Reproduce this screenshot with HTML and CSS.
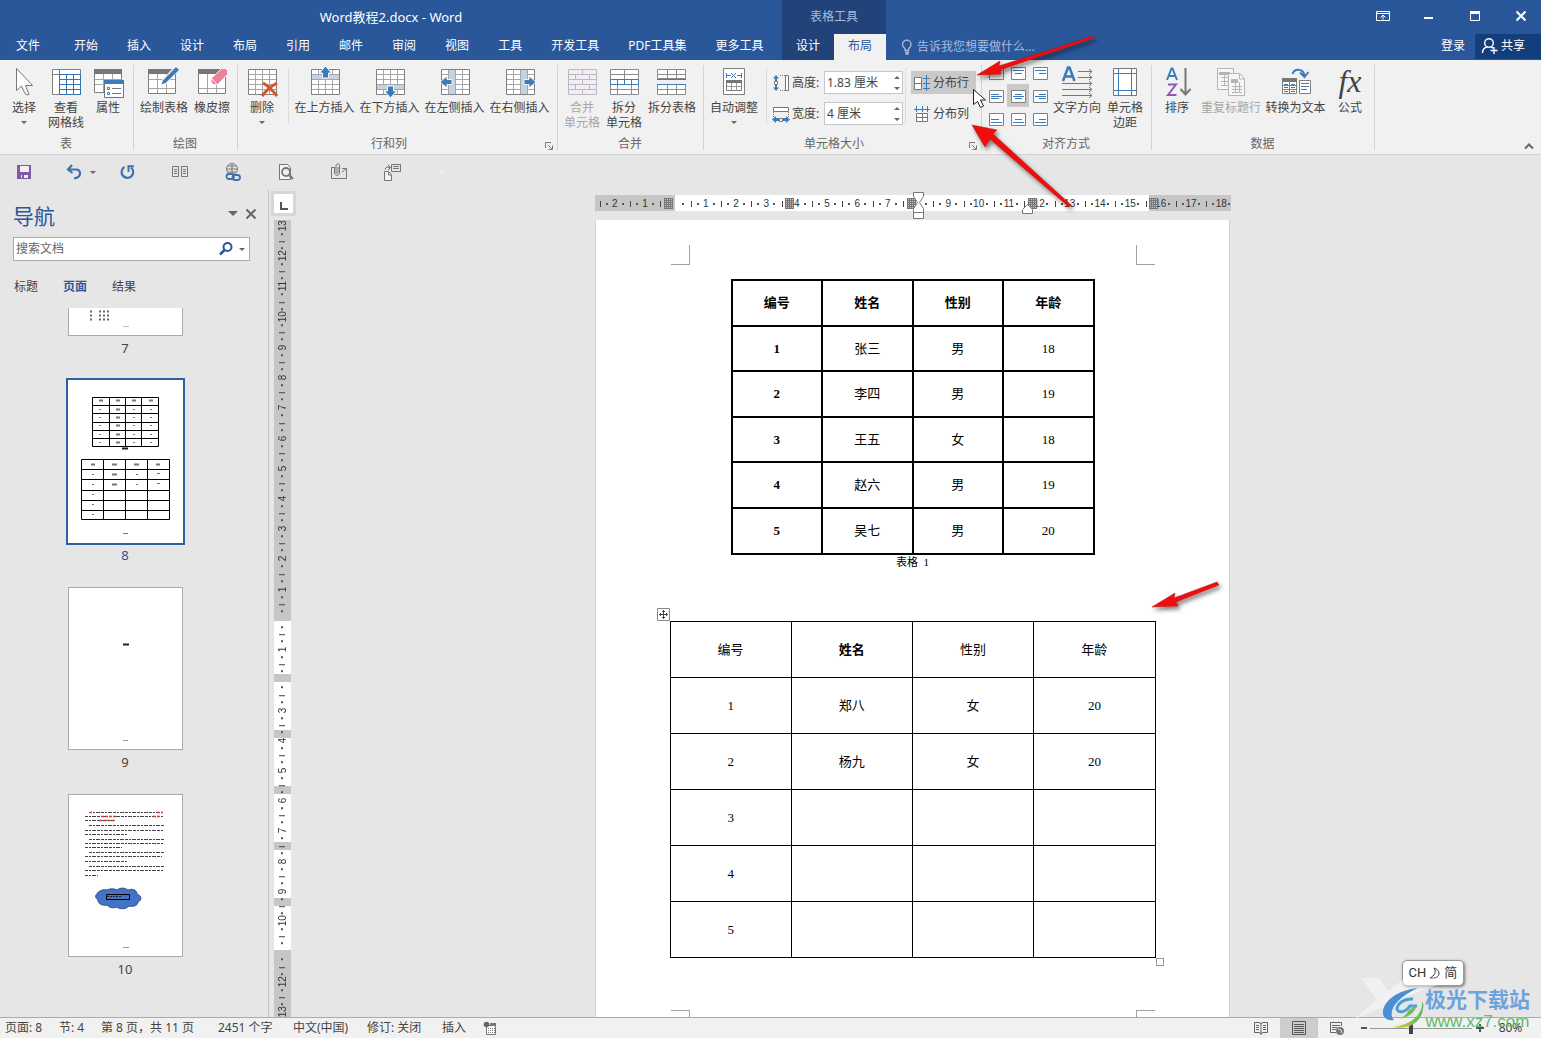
FILE: index.html
```html
<!DOCTYPE html>
<html lang="zh-CN">
<head>
<meta charset="utf-8">
<title>Word教程2.docx - Word</title>
<link rel="stylesheet" href="styles.css">
</head>
<body>
<svg class="defs" aria-hidden="true">
  <defs>
    <symbol id="grid" viewBox="0 0 32 32"><path fill="#fff" stroke="#808080" d="M2.500 3.500h28v25h-28z"/><path fill="none" stroke="#a6a6a6" d="M9.500 4v24M16.500 4v24M23.500 4v24M3 8.500h27M3 13.500h27M3 18.500h27M3 23.500h27"/></symbol>
    <symbol id="drop" viewBox="0 0 8 8"><path d="M1 3h6L4 6z" fill="#666"/></symbol>
    <symbol id="launch" viewBox="0 0 10 10"><path d="M1.500 7V1.500H7M4 4l4 4M8.500 4.500v4h-4" fill="none" stroke="#777"/></symbol>
    <symbol id="frame" viewBox="0 0 16 14"><path d="M1.500 1.500h14v12h-14z" fill="#fff" stroke="#808080"/></symbol>
  </defs>
</svg>

<header class="titlebar">
  <div class="title-left">
    <h1 class="doc-title">Word教程2.docx - Word</h1>
    <nav class="tabs">
      <button class="tab tab-file">文件</button><button class="tab">开始</button><button class="tab">插入</button><button class="tab">设计</button><button class="tab">布局</button><button class="tab">引用</button><button class="tab">邮件</button><button class="tab">审阅</button><button class="tab">视图</button><button class="tab">工具</button><button class="tab">开发工具</button><button class="tab">PDF工具集</button><button class="tab">更多工具</button>
    </nav>
  </div>
  <div class="context">
    <div class="context-name">表格工具</div>
    <div class="context-tabs"><button class="ctab">设计</button><button class="ctab active">布局</button></div>
  </div>
  <div class="title-right">
    <div class="window-buttons">
      <button aria-label="功能区显示选项"><svg width="14" height="12"><path d="M.5 1.500h13v9H.5zM1 3.500h12" fill="none" stroke="#fff"/><path d="M7 9.500v-4M4.500 7.500L7 5l2.500 2.500" fill="none" stroke="#fff"/></svg></button>
      <button aria-label="最小化"><svg width="14" height="12"><path d="M2 7h9v2H2z" fill="#fff"/></svg></button>
      <button aria-label="最大化"><svg width="14" height="12"><path d="M2.500 1.500h9v9h-9z" fill="none" stroke="#fff"/><path d="M2 1h10v3H2z" fill="#fff"/></svg></button>
      <button aria-label="关闭"><svg width="14" height="12"><path d="M2.500 1.500l9 9M11.500 1.500l-9 9" stroke="#fff" stroke-width="2"/></svg></button>
    </div>
    <div class="tell-row">
      <button class="tell"><svg width="12" height="16"><path d="M4 11.500V9.500C2.500 8.500 1.500 7.200 1.500 5.500a4.300 4.300 0 0 1 8.600 0c0 1.700-1 3-2.500 4v2zM4 13.500h4M4.500 15h3" fill="none" stroke="#a9bcd9" stroke-width="1.300"/></svg>告诉我您想要做什么...</button>
      <button class="login">登录</button>
      <button class="share"><svg width="18" height="18"><circle cx="8" cy="6" r="4.300" fill="none" stroke="#fff" stroke-width="1.400"/><path d="M1.500 16c0-3 2-5.500 5-6M10 10l2 1M13 10v7M9.500 13.500h7" fill="none" stroke="#fff" stroke-width="1.400"/></svg>共享</button>
    </div>
  </div>
</header>

<section class="ribbon" aria-label="布局">
  <div class="group g-table">
    <div class="tools">
      <button class="big w48"><svg width="32" height="32"><path d="M8.500 2.500v22l5-4.500 3.500 7.500q2 2.500 4 1l-3.500-9h7z" fill="#fff" stroke="#777"/></svg><span>选择</span><svg class="caret"><use href="#drop"/></svg></button>
      <button class="big w36"><svg width="32" height="32"><path d="M2.500 3.500h28v25h-28z" fill="#fff" stroke="#808080"/><path d="M9.500 4v24M3 8.500h27" stroke="#808080" fill="none"/><path d="M9.500 8.500h21v20h-21zM16.500 8v20M23.500 8v20M10 13.500h20M10 18.500h20M10 23.500h20" fill="none" stroke="#3473b3"/></svg><span>查看<br>网格线</span></button>
      <button class="big w48"><svg width="32" height="32"><path d="M2.500 3.500h27v23h-27z" fill="#fff" stroke="#808080"/><path d="M2 3h28v5H2z" fill="#777"/><path d="M3 13.500h26M3 18.500h26M11.500 8v18M20.500 8v18" stroke="#a6a6a6"/><path d="M12.500 14.500h19v17h-19z" fill="#fff" stroke="#777"/><path d="M12 14h20v4H12z" fill="#3c7ab8"/><path d="M20 22.500h9M20 27.500h9" stroke="#777"/><path d="M15.500 21.500h2v2h-2zM15.500 26.500h2v2h-2z" fill="none" stroke="#3c7ab8"/></svg><span>属性</span></button>
    </div>
    <div class="group-name">表</div>
  </div>
  <div class="group g-draw">
    <div class="tools">
      <button class="big w52"><svg width="32" height="32"><path d="M.5 3.500h27v24H.5z" fill="#fff" stroke="#808080"/><path d="M0 3h28v5H0z" fill="#777"/><path d="M9.500 8v19M18.500 8v19M1 13.500h26M1 22.500h26" stroke="#a6a6a6"/><path d="M16 16L29 2" stroke="#f0f0f0" stroke-width="6"/><path d="M13.500 18.500l1.500-4L28 1l3 3-13.500 13z" fill="#3c7ab8"/></svg><span>绘制表格</span></button>
      <button class="big w44"><svg width="32" height="32"><path d="M2.500 3.500h27v24h-27z" fill="#fff" stroke="#808080"/><path d="M2 3h28v5H2z" fill="#777"/><path d="M11.500 8v19M20.500 8v19M3 22.500h26" stroke="#a6a6a6"/><path d="M15.500 12.500l10-10h4l2 2v4l-10 10h-4l-2.500-2.500z" fill="#e8839b" stroke="#f0f0f0"/><path d="M16 13l4.500 4.500" stroke="#fff"/></svg><span>橡皮擦</span></button>
    </div>
    <div class="group-name">绘图</div>
  </div>
  <div class="group g-rows">
    <div class="tools">
      <button class="big w48"><svg width="32" height="32"><use href="#grid"/><path d="M17 17q7 4 14 13M31 17q-9 5-15 13" fill="none" stroke="#d9532c" stroke-width="3"/></svg><span>删除</span><svg class="caret"><use href="#drop"/></svg></button>
      <i class="rule"></i>
      <button class="big w65"><svg width="32" height="32"><use href="#grid"/><path d="M3 9h27v4H3z" fill="#c3d3e4"/><path d="M16.500 0l6 7h-3v5h-6V7h-3z" fill="#3c7ab8" stroke="#f5f5f5"/></svg><span>在上方插入</span></button>
      <button class="big w65"><svg width="32" height="32"><use href="#grid"/><path d="M3 19h27v4H3z" fill="#c3d3e4"/><path d="M16.500 32l6-7h-3v-5h-6v5h-3z" fill="#3c7ab8" stroke="#f5f5f5"/></svg><span>在下方插入</span></button>
      <button class="big w65"><svg width="32" height="32"><use href="#grid"/><path d="M10 4h6v24h-6z" fill="#c3d3e4"/><path d="M1 16l7-6v3.500h5v5H8V22z" fill="#3c7ab8" stroke="#f5f5f5"/></svg><span>在左侧插入</span></button>
      <button class="big w65"><svg width="32" height="32"><use href="#grid"/><path d="M17 4h6v24h-6z" fill="#c3d3e4"/><path d="M32 16l-7-6v3.500h-5v5h5V22z" fill="#3c7ab8" stroke="#f5f5f5"/></svg><span>在右侧插入</span></button>
    </div>
    <div class="group-name">行和列</div>
    <button class="launcher" aria-label="行和列设置"><svg width="10" height="10"><use href="#launch"/></svg></button>
  </div>
  <div class="group g-merge">
    <div class="tools">
      <button class="big w40" disabled><svg width="32" height="32"><path d="M2.500 3.500h28v25h-28zM3 8.500h27M3 13.500h27M3 18.500h27M3 23.500h27M16.500 4v5M9.500 9v5M23.500 9v5M9.500 19v5M23.500 19v5M16.500 24v4M16.500 14v5" fill="#f3edf5" stroke="#bdb8bf"/></svg><span>合并<br>单元格</span></button>
      <button class="big w44"><svg width="32" height="32"><path d="M2.500 3.500h28v25h-28zM3 8.500h27M3 23.500h27M16.500 4v9M9.500 19v9M23.500 19v9" fill="#fff" stroke="#8c8c8c"/><path d="M2.500 13.500h28v5h-28zM9.500 14v5M16.500 14v5M23.500 14v5" fill="#fff" stroke="#3c7ab8"/></svg><span>拆分<br>单元格</span></button>
      <button class="big w52"><svg width="32" height="32"><path d="M1.500 3.500h28v9h-28zM2 8.500h27M11.500 4v9M20.500 4v9M1.500 18.500h28v10h-28zM2 23.500h27M11.500 19v9M20.500 19v9" fill="#fff" stroke="#8c8c8c"/><path d="M1 13.500h29M1 18.500h29" stroke="#3c7ab8"/></svg><span>拆分表格</span></button>
    </div>
    <div class="group-name">合并</div>
  </div>
  <div class="group g-size">
    <div class="tools">
      <button class="big w60"><svg width="32" height="32"><path d="M5.500 2.500h21v26h-21z" fill="#fff" stroke="#808080"/><path d="M8.500 14.500h15v10h-15z" fill="#fff" stroke="#777"/><path d="M8 14h16v3H8z" fill="#777"/><path d="M9 20.500h15M13.500 17v8M18.500 17v8" stroke="#999"/><path d="M8.500 7v5M23.500 7v5M9 9.500h4M19 9.500h4M13 7l5 5M18 7l-5 5" stroke="#3c7ab8" fill="none"/></svg><span>自动调整</span><svg class="caret"><use href="#drop"/></svg></button>
      <i class="rule"></i>
      <div class="fields">
        <div class="field"><svg width="18" height="18"><path d="M4 1L1 4.500h2V7h2V4.500h2zM4 17l-3-3.500h2V11h2v2.500h2z" fill="#3c7ab8"/><path d="M2.500 7.500h3v3h-3z" fill="#fff" stroke="#777"/><path d="M8 1.500h5M8 16.500h5" stroke="#777" stroke-dasharray="1 1"/><path d="M13.500 1.500h3v15h-3z" fill="#fff" stroke="#777"/></svg><label for="cell-h">高度:</label><div class="spin"><input id="cell-h" type="text" value="1.83 厘米"><svg width="8" height="18"><path d="M1 5h6L4 2zM1 13h6l-3 3z" fill="#666"/></svg></div></div>
        <div class="field"><svg width="18" height="18"><path d="M1.500 2.500h15v4h-15z" fill="#fff" stroke="#777"/><path d="M1.500 7v5M16.500 7v5" stroke="#777" stroke-dasharray="1 1"/><path d="M0 14.500l4-3.500v2h3v3H4v2zM18 14.500L14 11v2h-3v3h3v2z" fill="#3c7ab8"/><path d="M7.500 13.500h3v3h-3z" fill="#fff" stroke="#777"/></svg><label for="cell-w">宽度:</label><div class="spin"><input id="cell-w" type="text" value="4 厘米"><svg width="8" height="18"><path d="M1 5h6L4 2zM1 13h6l-3 3z" fill="#666"/></svg></div></div>
      </div>
      <i class="rule"></i>
      <div class="fields">
        <button class="small hot"><svg width="16" height="16"><path d="M.5 2.500h7v12h-7zM1 8.500h6" fill="#fff" stroke="#777"/><path d="M9 3.500h7M9 8.500h7M9 13.500h7M12.500 0v16" stroke="#3c7ab8"/></svg>分布行</button>
        <button class="small"><svg width="16" height="16"><path d="M2.500 7.500h11v8h-11zM8.500 7v8M3 11.500h11" fill="#fff" stroke="#777"/><path d="M0 3.500h16M2.500 0v6M8.500 0v6M13.500 0v6" stroke="#3c7ab8"/></svg>分布列</button>
      </div>
    </div>
    <div class="group-name">单元格大小</div>
    <button class="launcher" aria-label="单元格大小设置"><svg width="10" height="10"><use href="#launch"/></svg></button>
  </div>
  <div class="group g-align">
    <div class="tools">
      <div class="align-grid">
        <button aria-label="靠上左对齐"><svg width="16" height="14"><use href="#frame"/><path d="M3 4.500h11M3 7.500h8" stroke="#3c7ab8"/></svg></button>
        <button aria-label="靠上居中"><svg width="16" height="14"><use href="#frame"/><path d="M3 4.500h11M5 7.500h7" stroke="#3c7ab8"/></svg></button>
        <button aria-label="靠上右对齐"><svg width="16" height="14"><use href="#frame"/><path d="M3 4.500h11M7 7.500h7" stroke="#3c7ab8"/></svg></button>
        <button aria-label="中部左对齐"><svg width="16" height="14"><use href="#frame"/><path d="M3 5.500h8M3 7.500h11M3 9.500h8" stroke="#3c7ab8"/></svg></button>
        <button aria-label="水平居中" class="on"><svg width="16" height="14"><use href="#frame"/><path d="M5 5.500h7M3 7.500h11M5 9.500h7" stroke="#3c7ab8"/></svg></button>
        <button aria-label="中部右对齐"><svg width="16" height="14"><use href="#frame"/><path d="M7 5.500h7M3 7.500h11M7 9.500h7" stroke="#3c7ab8"/></svg></button>
        <button aria-label="靠下左对齐"><svg width="16" height="14"><use href="#frame"/><path d="M3 7.500h8M3 10.500h11" stroke="#3c7ab8"/></svg></button>
        <button aria-label="靠下居中"><svg width="16" height="14"><use href="#frame"/><path d="M5 7.500h7M3 10.500h11" stroke="#3c7ab8"/></svg></button>
        <button aria-label="靠下右对齐"><svg width="16" height="14"><use href="#frame"/><path d="M7 7.500h7M3 10.500h11" stroke="#3c7ab8"/></svg></button>
      </div>
      <button class="big w52"><svg width="32" height="32"><path d="M2 15L7 1.500h1.500l5 13.500M4 10.500h7" fill="none" stroke="#3c7ab8" stroke-width="2.500"/><path d="M17 5.500h14M17 11.500h14M1 17.500h30M1 23.500h30M1 29.500h30M28 3l3 2.500L28 8M28 9l3 2.500-3 2.500M28 15l3 2.500-3 2.500M28 21l3 2.500-3 2.500M28 27l3 2.500-3 2.500" fill="none" stroke="#777"/></svg><span>文字方向</span></button>
      <button class="big w44"><svg width="32" height="32"><path d="M4.500 2.500h23v27h-23z" fill="#fff" stroke="#777"/><path d="M9.500 3v26M22.500 3v26M5 7.500h22M5 24.500h22" stroke="#3c7ab8"/></svg><span>单元格<br>边距</span></button>
    </div>
    <div class="group-name">对齐方式</div>
  </div>
  <div class="group g-data">
    <div class="tools">
      <button class="big w44"><svg width="32" height="32"><path d="M6 14l4.500-11.500h1L16 14M8 10h6" fill="none" stroke="#3c7ab8" stroke-width="2"/><path d="M7 18.500h8L7 29h8.500" fill="none" stroke="#8d5ab0" stroke-width="2"/><path d="M24.500 2v26M19.500 23l5 5.500 5-5.500" fill="none" stroke="#777" stroke-width="2"/></svg><span>排序</span></button>
      <button class="big w64" disabled><svg width="32" height="32"><path d="M2.500 2.500h16v21h-16zM6 11.500h10M6 15.500h10M6 19.500h10M9.500 8v12M13.500 8v12" fill="#f6f6f6" stroke="#b5b5b5"/><path d="M4 6h11v3H4z" fill="#b5b5b5"/><path d="M13.500 7.500h11l5 5v17h-16z" fill="#f6f6f6" stroke="#b5b5b5"/><path d="M24.500 8v5h5M17 20.500h10M17 23.500h10M17 26.500h10M20.500 16v11M24.500 16v11" fill="none" stroke="#b5b5b5"/><path d="M16 13h7v4h-7z" fill="#b5b5b5"/></svg><span>重复标题行</span></button>
      <button class="big w65"><svg width="32" height="32"><path d="M2.500 12.500h14v15h-14zM3 19.500h13M3 23.500h13M9.500 15v13" fill="#fff" stroke="#808080"/><path d="M2 12h15v4H2z" fill="#777"/><path d="M4 18.500h4M11 18.500h4M4 21.500h4M11 21.500h4M4 25.500h4M11 25.500h4" stroke="#3c7ab8"/><path d="M19.500 14.500h11v13h-11z" fill="#fff" stroke="#808080"/><path d="M21 17.500h8M21 20.500h8M21 23.500h6" stroke="#3c7ab8"/><path d="M12.500 8c2-6 11-6 12 2M20 6.500l4.500 4.500 4-5" fill="none" stroke="#3c7ab8" stroke-width="2"/></svg><span>转换为文本</span></button>
      <button class="big w44"><b class="fx">fx</b><span>公式</span></button>
    </div>
    <div class="group-name">数据</div>
  </div>
  <button class="collapse" aria-label="折叠功能区"><svg width="10" height="8"><path d="M1 6.500l4-4 4 4" fill="none" stroke="#666" stroke-width="2"/></svg></button>
</section>

<div class="quick">
  <button aria-label="保存"><svg width="18" height="18"><path d="M2 2h14v14H2z" fill="#7f5aa5"/><path d="M5 3h9v6H5zM6 12h7v3H6z" fill="#f0f0f0"/><path d="M7 12h2v3H7z" fill="#7f5aa5"/></svg></button>
  <button class="undo" aria-label="撤消"><svg width="18" height="18"><path d="M7 2L3 6.500 7.500 10M4 6.500h7q4 0 4 4t-6 5" fill="none" stroke="#3f72ad" stroke-width="2.200"/></svg><svg width="8" height="8"><use href="#drop"/></svg></button>
  <button class="redo" aria-label="重复"><svg width="18" height="18"><path d="M6.500 4a5.800 5.800 0 1 0 6.500.500" fill="none" stroke="#3f72ad" stroke-width="2.200"/><path d="M16 3.200h-5.500V9" fill="none" stroke="#3f72ad" stroke-width="2"/></svg></button>
  <button aria-label="双页"><svg width="18" height="18"><path d="M1.500 3.500h6v10h-6zM10.500 3.500h6v10h-6zM3 6.500h3M3 8.500h3M3 10.500h3M12 6.500h3M12 8.500h3M12 10.500h3" fill="none" stroke="#777"/></svg></button>
  <button aria-label="超链接"><svg width="18" height="18"><circle cx="8" cy="6" r="5.500" fill="none" stroke="#777"/><path d="M2.500 6h11M8 .5v11M4 3h8M4 9h8" stroke="#777"/><path d="M3 11h13v6H3z" fill="#e6e6e6"/><rect x="2.500" y="11" width="7.500" height="5" rx="2.500" fill="none" stroke="#3f72ad" stroke-width="1.800"/><rect x="8.500" y="12" width="7.500" height="5" rx="2.500" fill="none" stroke="#3f72ad" stroke-width="1.800"/></svg></button>
  <button aria-label="打印预览"><svg width="18" height="18"><path d="M2.500 1.500h8l3 3v12h-11z" fill="#f5f5f5" stroke="#777"/><circle cx="9" cy="9" r="4" fill="#eee" stroke="#777" stroke-width="1.800"/><path d="M12 12l4 4" stroke="#777" stroke-width="2.400"/></svg></button>
  <button aria-label="附件"><svg width="18" height="18"><path d="M4 4.500H1.500v11h15v-10H12M12 9l4-3" fill="none" stroke="#777"/><path d="M4.500 4v6c0 3 5 3 5 0V3c0-3-3.500-3-3.500 0v6.500c0 1 2 1 2 0V4" fill="none" stroke="#777"/></svg></button>
  <button aria-label="转换"><svg width="18" height="18"><path d="M8.500 1.500h9v7h-9zM10 3.500h6M10 5.500h6" fill="none" stroke="#777"/><path d="M1.500 8.500h4l3 3v6h-7zM5.500 9v3h3" fill="#f5f5f5" stroke="#777"/><path d="M2 6.500Q3 3 7 4.500M5 2l2.500 2.500L5 7" fill="none" stroke="#3f72ad"/></svg></button>
  <button aria-label="自定义快速访问工具栏"><svg width="12" height="8"><path d="M4 3h5L6 6z" fill="#f2f2f2"/></svg></button>
</div>

<div class="workspace">
  <aside class="nav-pane">
    <div class="nav-head"><h2>导航</h2><button aria-label="任务窗格选项"><svg width="12" height="12"><path d="M1 3h10L6 8z" fill="#666"/></svg></button><button aria-label="关闭导航"><svg width="12" height="12"><path d="M1.500 1.500l9 9M10.500 1.500l-9 9" stroke="#666" stroke-width="2"/></svg></button></div>
    <div class="search"><input type="text" placeholder="搜索文档" aria-label="搜索文档"><svg width="16" height="16"><circle cx="9.500" cy="6" r="4" fill="none" stroke="#2b579a" stroke-width="2"/><path d="M6.500 9L2 13.500" stroke="#2b579a" stroke-width="2.600"/></svg><svg class="caret"><use href="#drop"/></svg></div>
    <div class="nav-tabs"><button>标题</button><button class="on">页面</button><button>结果</button></div>
    <div class="thumbs">
      <figure class="cut"><svg class="thumb" viewBox="0 0 113 27"><path d="M21 3.500h4M30 3.500h10M21 7.500h4M30 7.500h10M21 11.500h4M30 11.500h10" stroke="#666" stroke-width="2" stroke-dasharray="2 2"/><path d="M54 18.500h6" stroke="#bbb"/></svg><figcaption>7</figcaption></figure>
      <figure class="sel"><svg class="thumb" viewBox="0 0 115 163"><path d="M24.500 17.500h66v49h-66zM24.500 25.500h66M24.500 33.500h66M24.500 42.500h66M24.500 50.500h66M24.500 58.500h66M41.500 17.500v49M57.500 17.500v49M73.500 17.500v49M13.500 79.500h88v60h-88zM13.500 89.500h88M13.500 99.500h88M13.500 110.500h88M13.500 120.500h88M13.500 130.500h88M35.500 79.500v60M57.500 79.500v60M79.500 79.500v60" fill="none" stroke="#000"/><path d="M31 20.500h4M48 20.500h4M64 20.500h4M81 20.500h4M48 29.500h4M48 37.500h4M48 45.500h4M48 54.500h4M48 62.500h4M23 84.500h4M44 84.500h5M66 84.500h5M88 84.500h4M44 94.500h5M44 104.500h5" stroke="#777" stroke-width="2"/><path d="M54 68.500h6" stroke="#222" stroke-width="2"/><path d="M31 29.500h2M31 37.500h2M31 45.500h2M31 54.500h2M31 62.500h2M65 29.500h2M65 37.500h2M65 45.500h2M65 54.500h2M65 62.500h2M82 29.500h2M82 37.500h2M82 45.500h2M82 54.500h2M82 62.500h2M24 94.500h2M24 104.500h2M24 114.500h2M24 124.500h2M24 134.500h2M68 94.500h2M68 104.500h2M89 93.500h3M89 103.500h3M55 153.500h5" stroke="#777"/></svg><figcaption>8</figcaption></figure>
      <figure><svg class="thumb" viewBox="0 0 113 161"><path d="M54 56.500h6" stroke="#222" stroke-width="2"/><path d="M54 152.500h5" stroke="#999"/></svg><figcaption>9</figcaption></figure>
      <figure><svg class="thumb" viewBox="0 0 113 161"><g fill="none" stroke="#444" stroke-dasharray="3 1 2 1 4 1"><path d="M20 17.500h74M16 21.500h79M16 25.500h31M20 30.500h75M16 35.500h79M16 39.500h43M20 44.500h75M16 48.500h79M16 52.500h37M20 57.500h75M16 61.500h77M16 66.500h42M20 71.500h75M16 75.500h79M16 80.500h13"/></g><path d="M20 17.500h5M88 17.500h6M32 21.500h15M84 21.500h8M30 25.500h16" stroke="#d23f31" stroke-width="1.500" stroke-dasharray="3 1"/><path d="M28 99c1-3 6-5 10-4 4-2 8-1 10 0 4-3 8-2 11 0 6-2 9 1 9 4 5 2 5 6 1 8 0 4-6 5-9 4-4 4-10 3-12 1-5 2-8 0-10-2-6 1-9-2-9-5-3-2-3-5-1-6z" fill="#4472c4" stroke="#2f528f"/><path d="M37.500 99.500h23v5h-23z" fill="none" stroke="#000"/><path d="M38 101.500h14" stroke="#222" stroke-dasharray="2 1"/><path d="M54 152.500h6" stroke="#999"/></svg><figcaption>10</figcaption></figure>
    </div>
  </aside>
  <div class="vruler-col">
    <button class="tabstop" aria-label="左对齐制表符"><svg width="8" height="8"><path d="M1 0v7h7" fill="none" stroke="#555" stroke-width="2"/></svg></button>
    <div class="vruler"><div class="vcells"><i>13</i><i>12</i><i>11</i><i>10</i><i>9</i><i>8</i><i>7</i><i>6</i><i>5</i><i>4</i><i>3</i><i>2</i><i>1</i><i></i><i>1</i><i></i><i>3</i><i>4</i><i>5</i><i>6</i><i>7</i><i>8</i><i>9</i><i>10</i><i></i><i>12</i><i>13</i></div></div>
  </div>
  <main class="canvas">
    <div class="hruler"><div class="hcells"><i>2</i><i>1</i><i></i><i>1</i><i>2</i><i>3</i><i>4</i><i>5</i><i>6</i><i>7</i><i></i><i>9</i><i>10</i><i>11</i><i>12</i><i>13</i><i>14</i><i>15</i><i>16</i><i>17</i><i>18</i></div>
      <b class="colmark m1"></b><b class="colmark m2"></b><b class="colmark m3"></b><b class="colmark m4"></b><b class="colmark m5"></b>
      <svg class="indent" width="12" height="28"><path d="M1.500.5h10v4l-4 6 4 6v4h-10v-4l4-6-4-6zM1.500 20.500h10v6h-10z" fill="#fff" stroke="#777"/></svg>
      <svg class="rindent" width="12" height="12"><path d="M1.500 10.500v-4l5-5 5 5v4z" fill="#fff" stroke="#777"/></svg>
    </div>
    <article class="page">
      <div class="crops top"><i></i><i></i></div>
      <table class="t1">
        <caption>表格&nbsp; 1</caption>
        <thead><tr><th>编号</th><th>姓名</th><th>性别</th><th>年龄</th></tr></thead>
        <tbody>
          <tr><th>1</th><td>张三</td><td>男</td><td>18</td></tr>
          <tr><th>2</th><td>李四</td><td>男</td><td>19</td></tr>
          <tr><th>3</th><td>王五</td><td>女</td><td>18</td></tr>
          <tr><th>4</th><td>赵六</td><td>男</td><td>19</td></tr>
          <tr><th>5</th><td>吴七</td><td>男</td><td>20</td></tr>
        </tbody>
      </table>
      <div class="t2-wrap">
        <svg class="handle" width="13" height="13"><path d="M.5.5h12v12H.5z" fill="#fff" stroke="#888"/><path d="M6.500 2.500v8M2.500 6.500h8M5 4l1.500-1.500L8 4M5 9l1.500 1.500L8 9M4 5L2.500 6.500 4 8M9 5l1.500 1.500L9 8" fill="none" stroke="#444"/></svg>
        <table class="t2">
          <tbody>
            <tr><td>编号</td><td><b>姓名</b></td><td>性别</td><td>年龄</td></tr>
            <tr><td>1</td><td>郑八</td><td>女</td><td>20</td></tr>
            <tr><td>2</td><td>杨九</td><td>女</td><td>20</td></tr>
            <tr><td>3</td><td></td><td></td><td></td></tr>
            <tr><td>4</td><td></td><td></td><td></td></tr>
            <tr><td>5</td><td></td><td></td><td></td></tr>
          </tbody>
        </table>
        <i class="resize"></i>
      </div>
      <div class="crops bottom"><i></i><i></i></div>
    </article>
  </main>
</div>

<footer class="status">
  <span class="s-page">页面: 8</span><span class="s-sec">节: 4</span><span class="s-of">第 8 页，共 11 页</span><span class="s-words">2451 个字</span><span class="s-lang">中文(中国)</span><span class="s-rev">修订: 关闭</span><span class="s-ins">插入</span>
  <svg width="14" height="14"><path d="M3.500 4.500h9v9h-9z" fill="#fff" stroke="#777"/><path d="M5 7.500h7M5 9.500h7M5 11.500h7" stroke="#777" stroke-dasharray="1 1"/><path d="M7 2h6v3H7z" fill="#777"/><circle cx="3.500" cy="3.500" r="2.800" fill="#666"/></svg>
  <div class="views">
    <button aria-label="阅读视图"><svg width="14" height="14"><path d="M.5 1.500H5l2 1 2-1h4.500v10H9l-2 1-2-1H.5zM7 2v12M2 4.500h3M2 6.500h3M2 8.500h3M9 4.500h3M9 6.500h3M9 8.500h3" fill="none" stroke="#666"/></svg></button>
    <button class="on" aria-label="页面视图"><svg width="14" height="14"><path d="M.5 .5h13v13H.5zM2 3.500h10M2 5.500h10M2 7.500h10M2 9.500h10M2 11.500h10" fill="none" stroke="#555"/></svg></button>
    <button aria-label="Web 版式"><svg width="14" height="14"><path d="M11.500 5V1.500H.5v10H6M2 4.500h8M2 6.500h5M2 8.500h4" fill="none" stroke="#666"/><circle cx="10" cy="10" r="4" fill="#777"/><path d="M8 8l3 1 1 3" stroke="#ddd" fill="none"/></svg></button>
  </div>
  <button class="zoom-step" aria-label="缩小"><svg width="8" height="8"><path d="M1 4h6" stroke="#555" stroke-width="2"/></svg></button>
  <input class="zoom" type="range" min="0" max="100" value="40" aria-label="显示比例">
  <button class="zoom-step" aria-label="放大"><svg width="8" height="8"><path d="M0 4h8M4 0v8" stroke="#555" stroke-width="2"/></svg></button>
  <button class="percent">80%</button>
</footer>

<svg class="arrows" width="264" height="600" aria-hidden="true">
  <defs><filter id="sh" x="-20%" y="-20%" width="150%" height="150%"><feDropShadow dx="2" dy="3" stdDeviation="2" flood-color="#000" flood-opacity=".5"/></filter></defs>
  <g filter="url(#sh)" fill="#f01010" stroke="#b01414" stroke-width=".5">
    <path d="M14 45l23-14-1 5 94-30 1 2-94 32 1 4z"/>
    <path d="M9 95l25 5-4 4 78 71-2 2-79-68-5 8z"/>
    <path d="M189 577l23-14-1 5 43-16 2 3-43 17 2 4z"/>
  </g>
  <path d="M10.500 59.500v15l4-3 3 6 3-1.500-3-6h5z" fill="#fff" stroke="#222"/>
</svg>
<div class="ime">CH<svg width="12" height="13"><path d="M5 1c3 4 0 8-4 10 5 1 9-1 9-5 0-2-2-4-5-5z" fill="none" stroke="#333"/></svg>简</div>
<div class="watermark">
  <svg class="wx" width="110" height="56" aria-hidden="true"><path d="M8 0h18l20 30H30zM52 0h50L50 20 0 42 34 14z" fill="#fff" opacity=".45"/></svg>
  <svg class="wlogo" width="44" height="40" aria-hidden="true"><defs><linearGradient id="sw" x1="1" x2="0" y2="1"><stop stop-color="#5fb86a"/><stop offset=".5" stop-color="#6abf5c"/><stop offset="1" stop-color="#f0d040"/></linearGradient></defs><path d="M36 0C16 2 0 13 1 26c1 5 6 7 11 6C5 25 13 10 36 0z" fill="#4a8fd4"/><path d="M31 11c-9-1-16 5-16 10 1 5 9 3 13-3h7" fill="none" stroke="#4a9fd4" stroke-width="3"/><path d="M40 13c1 14-10 23-29 26 9 3 28-1 30-18 1-4 0-6-1-8zM35 17c-2 7-8 13-19 14 6-1 9-6 11-9z" fill="url(#sw)"/></svg>
  <div class="wtext"><strong>极光下载站</strong><em>www.xz7.com</em></div>
</div>
</body>
</html>
```
FILE: styles.css
```css
* { box-sizing: border-box; }
html, body { height: 100%; }
body {
  margin: 0;
  display: flex;
  flex-direction: column;
  position: relative;
  overflow: hidden;
  background: #e6e6e6;
  color: #444;
  font: 12px/16px "Noto Sans", "Noto Sans CJK SC", sans-serif;
}
button {
  border: 0;
  padding: 0;
  background: none;
  color: inherit;
  font: inherit;
  white-space: nowrap;
}
svg { display: block; flex: none; }
i { font-style: normal; }
h1, h2, figure { margin: 0; font-weight: normal; }
.defs { position: absolute; width: 0; height: 0; }

/* title bar */
.titlebar { display: flex; height: 60px; flex: none; background: #2a579a; color: #fff; }
.title-left { width: 782px; flex: none; display: flex; flex-direction: column; }
.doc-title { font-size: 13px; line-height: 34px; height: 34px; text-align: center; }
.tabs { display: flex; height: 26px; }
.tab { padding: 0 15px 2px 14px; }
.tab-file { width: 60px; padding: 0 4px 2px 0; }
.context { width: 104px; flex: none; background: #21437a; display: flex; flex-direction: column; }
.context-name { height: 34px; line-height: 34px; text-align: center; color: #a9bcd9; }
.context-tabs { display: flex; flex: 1; }
.ctab { width: 52px; padding-bottom: 2px; }
.ctab.active { background: #f1f1f1; color: #2a579a; }
.title-right { flex: 1; display: flex; flex-direction: column; }
.window-buttons { display: flex; justify-content: flex-end; height: 34px; }
.window-buttons button { width: 46px; display: flex; align-items: center; justify-content: center; padding: 0 0 2px 6px; }
.tell-row { display: flex; height: 25px; }
.tell { display: flex; align-items: center; gap: 4px; margin: 0 auto 0 15px; color: #a9bcd9; }
.login { padding: 0 10px 2px; }
.share { width: 66px; display: flex; align-items: center; gap: 2px; padding: 0 0 2px 6px; background: #123f7c; }

/* ribbon */
.ribbon { display: flex; height: 95px; flex: none; background: #f1f1f1; border-bottom: 1px solid #d2d2d2; position: relative; }
.group { display: flex; flex-direction: column; position: relative; flex: none; }
.group::after { content: ""; position: absolute; right: 0; top: 5px; height: 85px; width: 1px; background: #d4d4d4; }
.g-table { width: 134px; }
.g-draw { width: 104px; }
.g-rows { width: 320px; }
.g-merge { width: 146px; }
.g-size { width: 278px; }
.g-align { width: 170px; }
.g-data { width: 223px; }
.tools { display: flex; height: 76px; padding-top: 6px; }
.g-draw .tools, .g-merge .tools { padding-left: 4px; }
.g-data .tools { padding-left: 3px; }
.group-name { text-align: center; color: #666; padding-right: 2px; }
.g-rows .group-name, .g-size .group-name { padding-right: 18px; }
.big { display: flex; flex-direction: column; align-items: center; flex: none; line-height: 15px; }
.big span { margin-top: 2px; }
.big:disabled { color: #a6a6a6; }
.caret { width: 8px; height: 8px; margin-top: 3px; }
.w36 { width: 36px; }
.w40 { width: 40px; }
.w44 { width: 44px; }
.w48 { width: 48px; }
.w52 { width: 52px; }
.w60 { width: 60px; }
.w64 { width: 64px; }
.w65 { width: 65px; }
.rule { width: 1px; height: 56px; margin: 2px 3px 0 2px; background: #dcdcdc; flex: none; }
.launcher { position: absolute; right: 4px; bottom: 3px; }
.fields { display: flex; flex-direction: column; gap: 8px; padding-top: 5px; margin-left: 2px; }
.field { display: flex; align-items: center; height: 23px; }
.field label { width: 34px; padding-left: 2px; }
.spin { width: 79px; height: 23px; display: flex; align-items: center; border: 1px solid #c6c6c6; background: #fff; padding-right: 3px; }
.spin input { width: 68px; border: 0; padding: 0 0 0 2px; background: none; color: #444; font: inherit; }
.small { width: 65px; height: 23px; display: flex; align-items: center; gap: 3px; padding-left: 3px; }
.small.hot { background: #c9c9c9; }
.align-grid { display: grid; grid-template-columns: repeat(3, 22px); grid-auto-rows: 23px; margin-left: 3px; margin-top: -5px; height: 69px; }
.align-grid button { display: flex; align-items: center; justify-content: center; }
.align-grid .on { background: #c9c9c9; }
.fx { height: 32px; font: italic 32px/30px "Liberation Serif", serif; color: #444; }
.collapse { position: absolute; right: 7px; bottom: 4px; }

/* quick access */
.quick { display: flex; align-items: center; gap: 35px; height: 35px; flex: none; padding: 0 0 2px 15px; }
.undo { display: flex; align-items: center; gap: 6px; margin: 0 -11px 0 -3px; }
.redo { margin-left: -3px; }

/* workspace */
.workspace { flex: 1; min-height: 0; display: flex; }
.nav-pane { width: 269px; flex: none; border-right: 1px solid #c3c3c3; display: flex; flex-direction: column; overflow: hidden; }
.nav-head { display: flex; align-items: center; gap: 6px; height: 47px; padding: 0 11px 0 13px; }
.nav-head h2 { margin-right: auto; font-size: 21px; line-height: 28px; padding-top: 5px; color: #2b579a; }
.search { display: flex; align-items: center; height: 24px; flex: none; margin: 0 18px 0 13px; background: #fff; border: 1px solid #ababab; padding: 0 3px 0 2px; }
.search input { flex: 1; min-width: 0; border: 0; padding: 0; font: inherit; }
.search input::placeholder { color: #666; opacity: 1; }
.search .caret { margin: 0 0 0 4px; }
.nav-tabs { display: flex; gap: 25px; height: 47px; flex: none; padding: 4px 0 0 14px; }
.nav-tabs .on { color: #2b579a; font-weight: bold; }
.thumbs { flex: 1; min-height: 0; overflow: hidden; display: flex; flex-direction: column; gap: 20px; align-items: center; padding-right: 18px; }
.thumbs figure { width: 115px; flex: none; }
.thumb { width: 115px; height: 163px; background: #fff; border: 1px solid #ababab; }
.cut .thumb { height: 28px; border-top: 0; }
.sel .thumb { border: 0; outline: 2px solid #2e629f; }
.thumbs figcaption { text-align: center; line-height: 24px; font-size: 13px; }
.sel figcaption { color: #2b579a; }

.vruler-col { width: 28px; flex: none; display: flex; flex-direction: column; }
.tabstop { width: 25px; height: 25px; margin: 1px 0 4px 2px; background: #fff; border: 3px solid #d6d6d6; display: flex; align-items: center; justify-content: center; padding-top: 4px; flex: none; }
.vruler {
  width: 17px; margin-left: 5px; flex: 1; min-height: 0; overflow: hidden;
  background: linear-gradient(#c6c6c6 401px, #fff 401px 454px, #c6c6c6 454px 462px, #fff 462px 510px, #c6c6c6 510px 518px, #fff 518px 566px, #c6c6c6 566px 574px, #fff 574px 622px, #c6c6c6 622px 630px, #fff 630px 678px, #c6c6c6 678px 686px, #fff 686px 730px, #c6c6c6 730px);
}
.vcells { height: 816px; margin-top: -9px; display: grid; grid-template-rows: repeat(27, 1fr); }
.vcells i {
  writing-mode: vertical-rl; transform: rotate(180deg); text-align: center;
  font: 10px/17px "Liberation Sans", sans-serif; color: #333;
  background: linear-gradient(#444, #444) 50% 100% / 6px 1px no-repeat, linear-gradient(#555, #555) 50% 22% / 2px 2px no-repeat, linear-gradient(#555, #555) 50% 78% / 2px 2px no-repeat;
}
.canvas { flex: 1; min-width: 0; display: flex; flex-direction: column; align-items: center; padding: 5px 13px 0 0; overflow: hidden; }
.hruler {
  width: 636px; height: 16px; flex: none; position: relative;
  background: linear-gradient(90deg, #c6c6c6 80px, #fff 80px 554px, #c6c6c6 554px);
}
/* the last cell runs on past the ruler's end and is clipped there */
.hcells { width: 642px; padding-left: 5px; height: 16px; display: grid; grid-template-columns: repeat(21, 1fr); clip-path: inset(0 6px 0 0); }
.hcells i {
  text-align: center; font: 10px/17px "Liberation Sans", sans-serif; color: #333;
  background: linear-gradient(#444, #444) 0 50% / 1px 6px no-repeat, linear-gradient(#555, #555) 22% 50% / 2px 2px no-repeat, linear-gradient(#555, #555) 78% 50% / 2px 2px no-repeat;
}
.colmark { position: absolute; top: 3px; width: 9px; height: 11px; background: repeating-linear-gradient(90deg, #777 0 1px, transparent 1px 2px), repeating-linear-gradient(#777 0 1px, #c6c6c6 1px 2px); }
.m1 { left: 69px; }
.m2 { left: 190px; }
.m3 { left: 312px; }
.m4 { left: 433px; }
.m5 { left: 554px; }
.indent { position: absolute; left: 317px; top: -3px; }
.rindent { position: absolute; left: 426px; top: 8px; }

/* document page */
.page { width: 635px; margin-top: 9px; flex: 1 0 auto; padding-top: 25px; background: #fff; border: solid #d2d2d2; border-width: 0 1px; display: flex; flex-direction: column; align-items: center; color: #000; font: 13px/16px "Liberation Serif", "Noto Sans CJK SC", serif; }
.crops { width: 484px; display: flex; justify-content: space-between; }
.crops i { width: 19px; height: 20px; border: 0 solid #a0a0a0; }
.top i { border-bottom-width: 1px; }
.bottom i { border-top-width: 1px; }
.crops i:first-child { border-right-width: 1px; }
.crops i:last-child { border-left-width: 1px; }
table { border-collapse: collapse; table-layout: fixed; text-align: center; }
td, th { padding: 0; }
.t1 { width: 364px; margin-top: 14px; }
.t1 caption { caption-side: bottom; font-size: 11px; line-height: 14px; }
.t1 td, .t1 th { border: 2px solid #000; }
.t1 tr { height: 46px; }
.t1 tbody tr:nth-child(odd) { height: 45px; }
.t1 tbody tr:last-child { height: 46px; }
.t2-wrap { position: relative; width: 486px; margin-top: 52px; }
.t2 { width: 486px; }
.t2 td { border: 1px solid #000; height: 56px; }
.handle { position: absolute; left: -13px; top: -13px; }
.resize { position: absolute; right: -8px; bottom: -8px; width: 8px; height: 8px; background: #fff; border: 1px solid #999; }
.bottom { margin-top: 52px; height: 20px; }

/* status bar */
.status { display: flex; align-items: center; height: 21px; flex: none; background: #f1f1f1; border-top: 1px solid #ababab; padding: 0 6px 0 5px; white-space: nowrap; }
.s-page { width: 54px; }
.s-sec { width: 42px; }
.s-of { width: 117px; }
.s-words, .s-rev { width: 75px; }
.s-lang { width: 74px; }
.s-ins { width: 41px; }
.views { display: flex; height: 20px; margin-left: auto; }
.views button { width: 38px; display: flex; align-items: center; justify-content: center; }
.views .on { background: #cdcdcd; }
.zoom-step { width: 12px; display: flex; justify-content: center; margin-left: 2px; }
.zoom { appearance: none; width: 102px; height: 16px; margin: 0; background: linear-gradient(#999, #999) 0 50% / 100% 1px no-repeat; }
.zoom::-webkit-slider-thumb { appearance: none; width: 4px; height: 11px; background: #444; }
.percent { width: 49px; text-align: center; }

/* overlays */
.arrows { position: absolute; left: 963px; top: 30px; pointer-events: none; }
.ime { position: absolute; right: 77px; bottom: 52px; width: 62px; height: 26px; display: flex; align-items: center; justify-content: center; gap: 3px; background: #fff; border: 1px solid #999; border-radius: 5px; box-shadow: 1px 1px 3px #777; color: #333; font: 13px/16px Roboto, "Noto Sans CJK SC", sans-serif; }
.watermark { position: absolute; right: 8px; bottom: 2px; width: 180px; height: 58px; pointer-events: none; }
.wx { position: absolute; left: 0; top: 0; }
.wlogo { position: absolute; left: 29px; top: 10px; }
.wtext { position: absolute; right: 3px; top: 8px; display: flex; flex-direction: column; align-items: center; white-space: nowrap; }
.wtext strong { font-size: 21px; line-height: 26px; font-weight: bold; color: #6ba3dc; }
.wtext em { font: 17px/20px "Liberation Sans", sans-serif; color: #63ba72; }
```
